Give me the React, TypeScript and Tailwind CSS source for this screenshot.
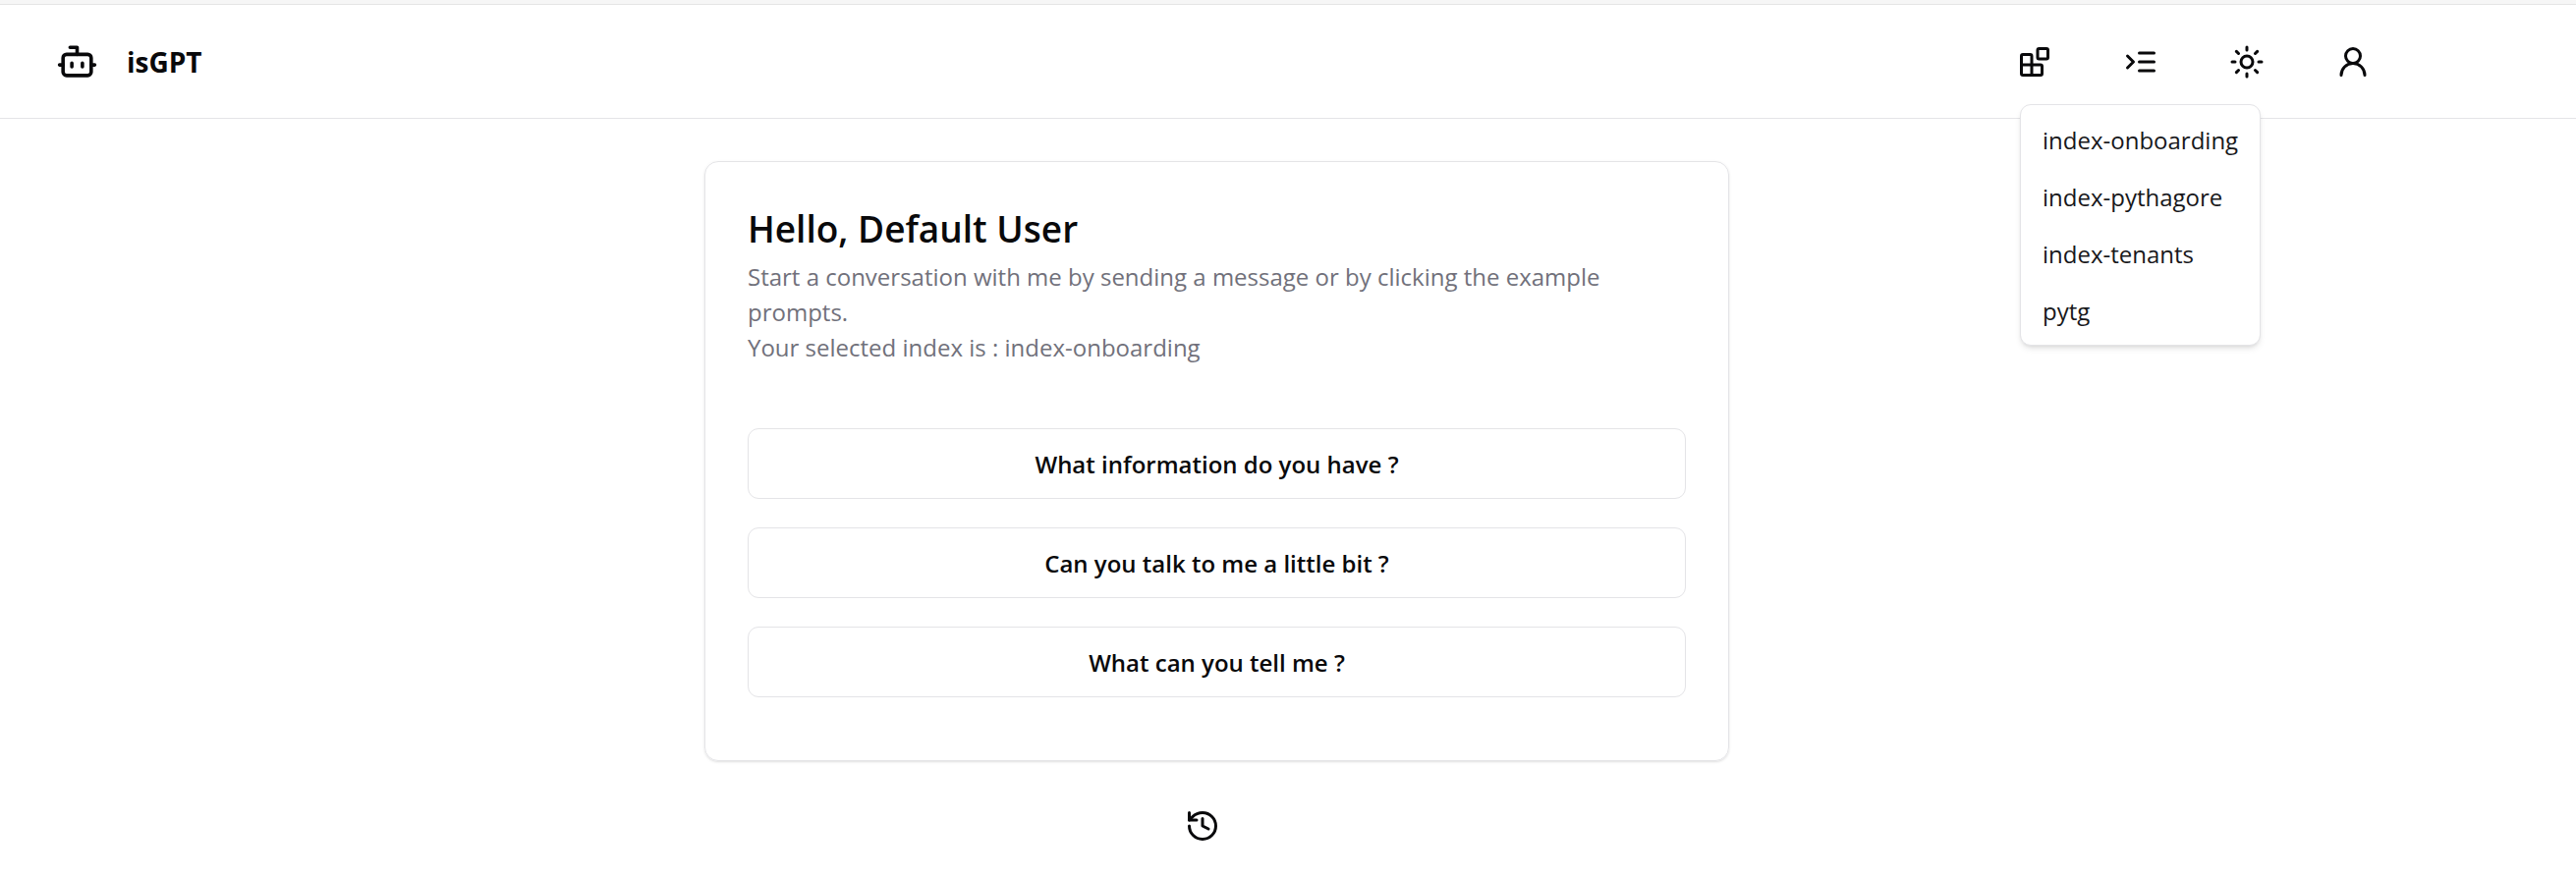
import React from "react";

const icon = {
  viewBox: "0 0 24 24",
  fill: "none",
  stroke: "currentColor",
  strokeWidth: 2,
  strokeLinecap: "round",
  strokeLinejoin: "round",
  "aria-hidden": true,
} as const;

function BotIcon() {
  return (
    <svg {...icon} className="size-[43px] shrink-0">
      <path d="M12 8V4H8" />
      <rect width="16" height="12" x="4" y="8" rx="2" />
      <path d="M2 14h2M20 14h2M15 13v2M9 13v2" />
    </svg>
  );
}

function BlocksIcon() {
  return (
    <svg {...icon} className="size-9">
      <rect width="7" height="7" x="14" y="3" rx="1" />
      <path d="M10 21V8a1 1 0 0 0-1-1H4a1 1 0 0 0-1 1v12a1 1 0 0 0 1 1h12a1 1 0 0 0 1-1v-5a1 1 0 0 0-1-1H3" />
    </svg>
  );
}

function IndentIcon() {
  return (
    <svg {...icon} className="size-9">
      <path d="m3 8 4 4-4 4M21 12H11M21 6H11M21 18H11" />
    </svg>
  );
}

function SunIcon() {
  return (
    <svg {...icon} className="size-9">
      <circle cx="12" cy="12" r="4" />
      <path d="M12 2v2M12 20v2m-7.07-17.07 1.41 1.41m11.32 11.32 1.41 1.41M2 12h2M20 12h2M6.34 17.66l-1.41 1.41M19.07 4.93l-1.41 1.41" />
    </svg>
  );
}

function UserIcon() {
  return (
    <svg {...icon} className="size-9">
      <circle cx="12" cy="8" r="5" />
      <path d="M20 21a8 8 0 0 0-16 0" />
    </svg>
  );
}

function HistoryIcon() {
  return (
    <svg {...icon} className="size-9">
      <path d="M3 12a9 9 0 1 0 9-9 9.75 9.75 0 0 0-6.74 2.74L3 8" />
      <path d="M3 3v5h5M12 7v5l4 2" />
    </svg>
  );
}

function IconButton({ label, children }: { label: string; children: React.ReactNode }) {
  return (
    <button
      type="button"
      aria-label={label}
      className="flex size-[72px] items-center justify-center rounded-xl hover:bg-zinc-100"
    >
      {children}
    </button>
  );
}

const indexes = ["index-onboarding", "index-pythagore", "index-tenants", "pytg"];
const prompts = ["What information do you have ?", "Can you talk to me a little bit ?", "What can you tell me ?"];

export default function App() {
  return (
    <div className="min-h-screen bg-white font-['Open_Sans','Noto_Sans',sans-serif] text-zinc-950">
      <div className="h-[5px] border-b border-[#e5e5e5] bg-[#f6f6f6]" />
      <header className="flex h-[116px] items-center justify-between border-b border-zinc-200 pr-[191px] pl-[57px]">
        <a href="#" className="flex items-center gap-[29px] text-[28px] font-bold">
          <BotIcon />
          <span>isGPT</span>
        </a>
        <nav className="flex gap-9">
          <div className="relative">
            <IconButton label="Select index">
              <BlocksIcon />
            </IconButton>
            <ul
              role="menu"
              className="absolute top-[79px] left-[21px] rounded-[11px] border border-zinc-200 bg-white px-2 py-[6px] text-[24px] shadow-md"
            >
              {indexes.map((name) => (
                <li key={name} role="none">
                  <button
                    type="button"
                    role="menuitem"
                    className="flex h-[58px] w-full items-center rounded-md px-[14px] pt-[2px] whitespace-nowrap text-zinc-900 hover:bg-zinc-100"
                  >
                    {name}
                  </button>
                </li>
              ))}
            </ul>
          </div>
          <IconButton label="Prompts">
            <IndentIcon />
          </IconButton>
          <IconButton label="Toggle theme">
            <SunIcon />
          </IconButton>
          <IconButton label="Account">
            <UserIcon />
          </IconButton>
        </nav>
      </header>
      <main className="flex flex-col items-center pt-[43px] pr-[145px]">
        <section className="w-full max-w-[1043px] rounded-[14px] border border-zinc-200 p-[43px] shadow-sm">
          <h1 className="mb-[6px] text-[37px] leading-[50px] font-semibold">Hello, Default User</h1>
          <div className="text-[24px] leading-9 text-zinc-500">
            <p>Start a conversation with me by sending a message or by clicking the example prompts.</p>
            <p>Your selected index is : index-onboarding</p>
          </div>
          <div className="flex flex-col gap-[29px] pt-[64px] pb-[21px]">
            {prompts.map((text) => (
              <button
                key={text}
                type="button"
                className="h-[72px] w-full rounded-[11px] border border-zinc-200 pt-[2px] text-[24px] font-semibold hover:bg-zinc-100"
              >
                {text}
              </button>
            ))}
          </div>
        </section>
        <div className="pt-[30px] pr-[30px]">
          <IconButton label="History">
            <HistoryIcon />
          </IconButton>
        </div>
      </main>
    </div>
  );
}
